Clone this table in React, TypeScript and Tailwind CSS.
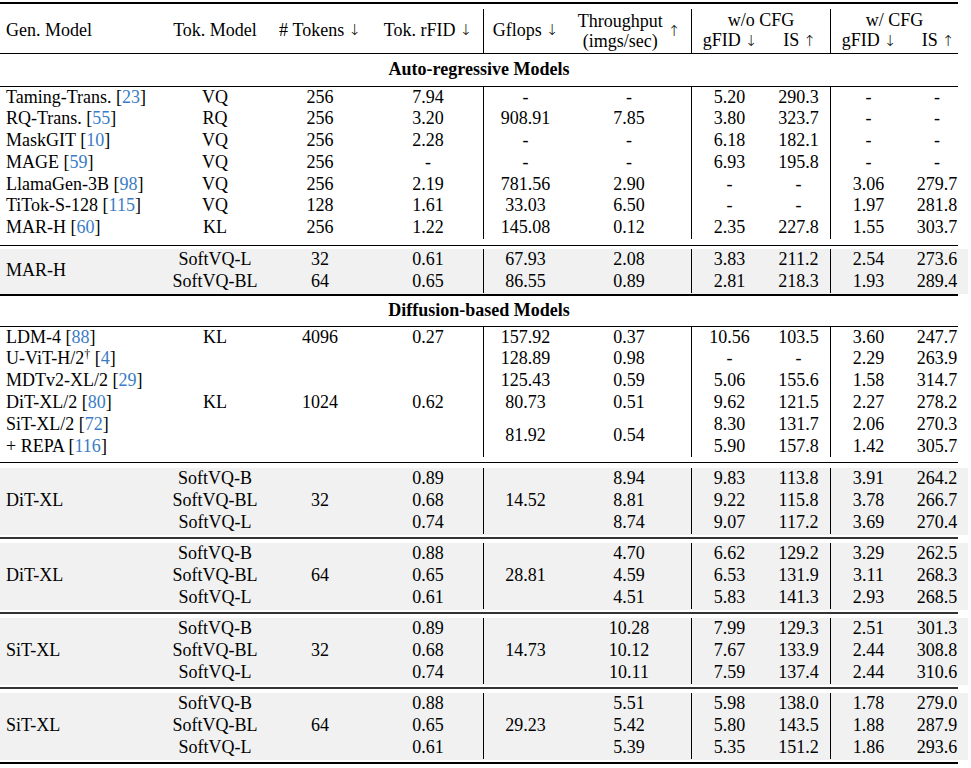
import React from "react";

type Cell = { c: number; v?: React.ReactNode; span?: 2 | 3 };

const grid =
  "grid w-[958px] grid-cols-[163px_104px_106px_110px_84px_124px_76px_63px_76px_52px] auto-rows-[21.8px]";

const lineCols = [4, 6, 8];

function Cite({ n }: { n: number }) {
  return (
    <span>
      {" "}[<span className="text-[#3a7cc6]">{n}</span>]
    </span>
  );
}

function Down() {
  return <span className="ml-[4px] font-['DejaVu_Sans',sans-serif] text-[15px] font-extralight">↓</span>;
}

function Up() {
  return <span className="ml-[4px] font-['DejaVu_Sans',sans-serif] text-[15px] font-extralight">↑</span>;
}

function Row({ cells }: { cells: Cell[] }) {
  return (
    <>
      {cells.map((cell, i) => {
        const span = cell.span === 2 ? "row-span-2" : cell.span === 3 ? "row-span-3" : "";
        const line = lineCols.includes(cell.c) ? "border-l border-black" : "";
        const align =
          cell.c === 0 ? "justify-start pl-[6px]" : cell.c === 9 ? "justify-center pl-[10px]" : "justify-center";
        return (
          <div key={i} className={`flex items-center whitespace-nowrap ${span} ${line} ${align}`}>
            {cell.v}
          </div>
        );
      })}
    </>
  );
}

const flat = (vals: React.ReactNode[]): Cell[] => vals.map((v, c) => ({ c, v }));

const autoRegressive: [string, number, ...string[]][] = [
  ["Taming-Trans.", 23, "VQ", "256", "7.94", "-", "-", "5.20", "290.3", "-", "-"],
  ["RQ-Trans.", 55, "RQ", "256", "3.20", "908.91", "7.85", "3.80", "323.7", "-", "-"],
  ["MaskGIT", 10, "VQ", "256", "2.28", "-", "-", "6.18", "182.1", "-", "-"],
  ["MAGE", 59, "VQ", "256", "-", "-", "-", "6.93", "195.8", "-", "-"],
  ["LlamaGen-3B", 98, "VQ", "256", "2.19", "781.56", "2.90", "-", "-", "3.06", "279.7"],
  ["TiTok-S-128", 115, "VQ", "128", "1.61", "33.03", "6.50", "-", "-", "1.97", "281.8"],
  ["MAR-H", 60, "KL", "256", "1.22", "145.08", "0.12", "2.35", "227.8", "1.55", "303.7"],
];

const softGroups = [
  {
    model: "DiT-XL",
    tokens: "32",
    gflops: "14.52",
    rows: [
      ["SoftVQ-B", "0.89", "8.94", "9.83", "113.8", "3.91", "264.2"],
      ["SoftVQ-BL", "0.68", "8.81", "9.22", "115.8", "3.78", "266.7"],
      ["SoftVQ-L", "0.74", "8.74", "9.07", "117.2", "3.69", "270.4"],
    ],
  },
  {
    model: "DiT-XL",
    tokens: "64",
    gflops: "28.81",
    rows: [
      ["SoftVQ-B", "0.88", "4.70", "6.62", "129.2", "3.29", "262.5"],
      ["SoftVQ-BL", "0.65", "4.59", "6.53", "131.9", "3.11", "268.3"],
      ["SoftVQ-L", "0.61", "4.51", "5.83", "141.3", "2.93", "268.5"],
    ],
  },
  {
    model: "SiT-XL",
    tokens: "32",
    gflops: "14.73",
    rows: [
      ["SoftVQ-B", "0.89", "10.28", "7.99", "129.3", "2.51", "301.3"],
      ["SoftVQ-BL", "0.68", "10.12", "7.67", "133.9", "2.44", "308.8"],
      ["SoftVQ-L", "0.74", "10.11", "7.59", "137.4", "2.44", "310.6"],
    ],
  },
  {
    model: "SiT-XL",
    tokens: "64",
    gflops: "29.23",
    rows: [
      ["SoftVQ-B", "0.88", "5.51", "5.98", "138.0", "1.78", "279.0"],
      ["SoftVQ-BL", "0.65", "5.42", "5.80", "143.5", "1.88", "287.9"],
      ["SoftVQ-L", "0.61", "5.39", "5.35", "151.2", "1.86", "293.6"],
    ],
  },
];

function SoftBlock({ group }: { group: (typeof softGroups)[number] }) {
  return (
    <div className="w-[968px] bg-[#f1f1f1] pb-[1.5px]">
      <div className={grid}>
        {group.rows.map((r, i) => {
          const cells: Cell[] =
            i === 0
              ? [
                  { c: 0, v: group.model, span: 3 },
                  { c: 1, v: r[0] },
                  { c: 2, v: group.tokens, span: 3 },
                  { c: 3, v: r[1] },
                  { c: 4, v: group.gflops, span: 3 },
                  { c: 5, v: r[2] },
                  { c: 6, v: r[3] },
                  { c: 7, v: r[4] },
                  { c: 8, v: r[5] },
                  { c: 9, v: r[6] },
                ]
              : [
                  { c: 1, v: r[0] },
                  { c: 3, v: r[1] },
                  { c: 5, v: r[2] },
                  { c: 6, v: r[3] },
                  { c: 7, v: r[4] },
                  { c: 8, v: r[5] },
                  { c: 9, v: r[6] },
                ];
          return <Row key={i} cells={cells} />;
        })}
      </div>
    </div>
  );
}

function SectionTitle({ children, h }: { children: React.ReactNode; h: string }) {
  return <div className={`flex w-[958px] items-center justify-center font-bold ${h}`}>{children}</div>;
}

export default function App() {
  return (
    <div className="min-h-[768px] w-[971px] bg-white pt-[2px] font-['Liberation_Serif',serif] text-[18px] leading-[21.8px] text-black">
      <div className="h-[1.5px] w-[958px] bg-black" />

      {/* header */}
      <div className="pt-[5px]">
        <div className="grid h-[44px] w-[958px] grid-cols-[163px_104px_106px_110px_84px_124px_76px_63px_76px_52px]">
          <div className="flex items-center pl-[6px]">Gen. Model</div>
          <div className="flex items-center justify-center">Tok. Model</div>
          <div className="flex items-center justify-center">
            #&nbsp;Tokens
            <Down />
          </div>
          <div className="flex items-center justify-center">
            Tok. rFID
            <Down />
          </div>
          <div className="flex items-center justify-center border-l border-black">
            Gflops
            <Down />
          </div>
          <div className="flex items-center justify-center gap-[1px]">
            <div className="flex flex-col items-center leading-[20px]">
              <span>Throughput</span>
              <span>(imgs/sec)</span>
            </div>
            <span className="mt-[2px]">
              <Up />
            </span>
          </div>
          <div className="col-span-2 flex flex-col justify-center border-l border-black leading-[20px]">
            <div className="text-center">w/o CFG</div>
            <div className="grid grid-cols-[76px_63px]">
              <div className="text-center">
                gFID
                <Down />
              </div>
              <div className="text-center">
                IS
                <Up />
              </div>
            </div>
          </div>
          <div className="col-span-2 flex flex-col justify-center border-l border-black leading-[20px]">
            <div className="text-center">w/ CFG</div>
            <div className="grid grid-cols-[76px_52px]">
              <div className="text-center">
                gFID
                <Down />
              </div>
              <div className="pl-[10px] text-center">
                IS
                <Up />
              </div>
            </div>
          </div>
        </div>
      </div>
      <div className="h-[1px] w-[958px] bg-black" />

      <SectionTitle h="h-[32px]">Auto-regressive Models</SectionTitle>
      <div className="h-[1px] w-[958px] bg-black" />

      <div className="pb-[5.5px]">
        <div className={grid}>
          {autoRegressive.map(([name, cite, ...rest], i) => (
            <Row
              key={i}
              cells={flat([
                <span>
                  {name}
                  <Cite n={cite} />
                </span>,
                ...rest,
              ])}
            />
          ))}
        </div>
      </div>
      <div className="h-[1px] w-[958px] bg-black" />

      <div className="pt-[3.5px]">
        <div className="w-[968px] bg-[#f1f1f1] pb-[1.5px]">
          <div className={grid}>
            <Row
              cells={[
                { c: 0, v: "MAR-H", span: 2 },
                { c: 1, v: "SoftVQ-L" },
                { c: 2, v: "32" },
                { c: 3, v: "0.61" },
                { c: 4, v: "67.93" },
                { c: 5, v: "2.08" },
                { c: 6, v: "3.83" },
                { c: 7, v: "211.2" },
                { c: 8, v: "2.54" },
                { c: 9, v: "273.6" },
              ]}
            />
            <Row cells={flat([null, "SoftVQ-BL", "64", "0.65", "86.55", "0.89", "2.81", "218.3", "1.93", "289.4"]).slice(1)} />
          </div>
        </div>
      </div>
      <div className="h-[1.5px] w-[958px] bg-black" />

      <SectionTitle h="h-[30px]">Diffusion-based Models</SectionTitle>
      <div className="h-[1px] w-[958px] bg-black" />

      <div className="pb-[5px]">
        <div className={grid}>
          <Row
            cells={flat([
              <span>
                LDM-4
                <Cite n={88} />
              </span>,
              "KL",
              "4096",
              "0.27",
              "157.92",
              "0.37",
              "10.56",
              "103.5",
              "3.60",
              "247.7",
            ])}
          />
          <Row
            cells={flat([
              <span>
                U-ViT-H/2<sup className="text-[12px]">†</sup>
                <Cite n={4} />
              </span>,
              "",
              "",
              "",
              "128.89",
              "0.98",
              "-",
              "-",
              "2.29",
              "263.9",
            ])}
          />
          <Row
            cells={flat([
              <span>
                MDTv2-XL/2
                <Cite n={29} />
              </span>,
              "",
              "",
              "",
              "125.43",
              "0.59",
              "5.06",
              "155.6",
              "1.58",
              "314.7",
            ])}
          />
          <Row
            cells={flat([
              <span>
                DiT-XL/2
                <Cite n={80} />
              </span>,
              "KL",
              "1024",
              "0.62",
              "80.73",
              "0.51",
              "9.62",
              "121.5",
              "2.27",
              "278.2",
            ])}
          />
          <Row
            cells={[
              {
                c: 0,
                v: (
                  <span>
                    SiT-XL/2
                    <Cite n={72} />
                  </span>
                ),
              },
              { c: 1, v: "" },
              { c: 2, v: "" },
              { c: 3, v: "" },
              { c: 4, v: "81.92", span: 2 },
              { c: 5, v: "0.54", span: 2 },
              { c: 6, v: "8.30" },
              { c: 7, v: "131.7" },
              { c: 8, v: "2.06" },
              { c: 9, v: "270.3" },
            ]}
          />
          <Row
            cells={[
              {
                c: 0,
                v: (
                  <span>
                    + REPA
                    <Cite n={116} />
                  </span>
                ),
              },
              { c: 1, v: "" },
              { c: 2, v: "" },
              { c: 3, v: "" },
              { c: 6, v: "5.90" },
              { c: 7, v: "157.8" },
              { c: 8, v: "1.42" },
              { c: 9, v: "305.7" },
            ]}
          />
        </div>
      </div>
      <div className="h-[1px] w-[958px] bg-black" />

      <div className="pt-[5px]">
        {softGroups.map((g, i) => (
          <div key={i}>
            <SoftBlock group={g} />
            {i < softGroups.length - 1 ? (
              <div className="pt-[2px] pb-[4px]">
                <div className="h-[2px] w-[958px] bg-[#333]" />
              </div>
            ) : (
              <div className="pt-[2px]">
                <div className="h-[2px] w-[958px] bg-black" />
              </div>
            )}
          </div>
        ))}
      </div>
    </div>
  );
}
